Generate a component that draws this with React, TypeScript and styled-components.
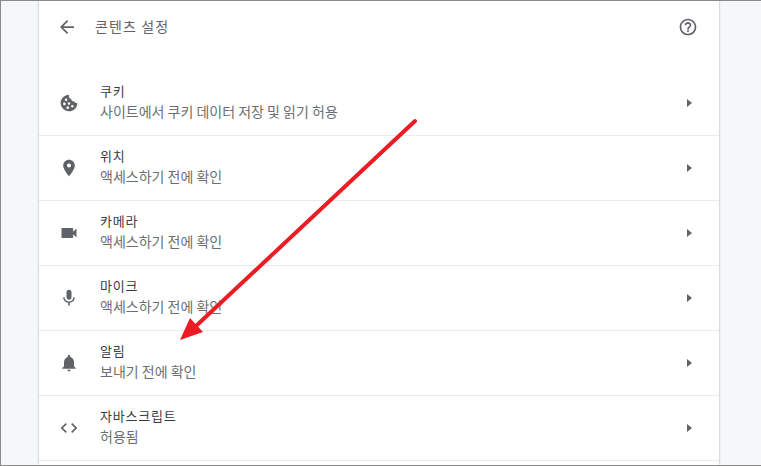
import { FC, ReactNode } from "react";
import styled, { createGlobalStyle } from "styled-components";

const GlobalStyle = createGlobalStyle`
  html, body {
    margin: 0;
    padding: 0;
    background: #f6f7f9;
  }
`;

const Frame = styled.div`
  position: relative;
  box-sizing: border-box;
  width: 761px;
  height: 466px;
  overflow: hidden;
  display: flex;
  justify-content: flex-start;
  padding-left: 38px;
  border: 1px solid #8a8a8a;
  border-right: none;
  background: #f6f7f9;
  font-family: "Noto Sans CJK KR", "Noto Sans", sans-serif;
`;

const Card = styled.main`
  width: 680px;
  height: 100%;
  background: #fff;
  box-shadow: 0 0 2px rgba(60, 64, 67, 0.45);
`;

const Header = styled.header`
  display: flex;
  align-items: center;
  height: 52px;
  padding: 0 21px 0 21px;
`;

const Title = styled.h1`
  flex: 1;
  margin: 0 0 3px 21px;
  font-size: 14px;
  font-weight: 400;
  letter-spacing: 1.1px;
  color: #5f6368;
`;

const Spacer = styled.div`
  height: 18px;
`;

const List = styled.ul`
  margin: 0;
  padding: 0;
  list-style: none;
`;

const Row = styled.li`
  box-sizing: border-box;
  display: flex;
  align-items: center;
  height: 65px;
  padding: 0 26px 0 20px;
  border-bottom: 1px solid #ebebeb;
`;

const IconSlot = styled.div`
  display: flex;
  justify-content: center;
  align-items: center;
  width: 20px;
  height: 20px;
  color: #5f6368;
`;

const TextBlock = styled.div`
  flex: 1;
  margin: 0 0 4px 21px;
  display: flex;
  flex-direction: column;
  gap: 2px;
`;

const RowTitle = styled.span`
  font-size: 13px;
  line-height: 18px;
  letter-spacing: 0.8px;
  color: #3a3c40;
`;

const RowSub = styled.span`
  font-size: 14px;
  line-height: 18px;
  color: #6b6f74;
`;

const Chevron = styled.span`
  width: 0;
  height: 0;
  margin-right: 1px;
  border-top: 4px solid transparent;
  border-bottom: 4px solid transparent;
  border-left: 5px solid #5f6368;
`;

const ArrowOverlay = styled.svg`
  position: absolute;
  left: -1px;
  top: -1px;
  pointer-events: none;
`;

const BackIcon = () => (
  <svg width="14" height="14" viewBox="0 0 16 16" fill="#5f6368">
    <path d="M16 7H3.8l5.6-5.6L8 0 0 8l8 8 1.4-1.4L3.8 9H16z" />
  </svg>
);

const HelpIcon = () => (
  <svg width="20" height="20" viewBox="0 0 24 24" fill="#5f6368">
    <path d="M11 18h2v-2h-2v2zm1-16C6.48 2 2 6.48 2 12s4.48 10 10 10 10-4.48 10-10S17.52 2 12 2zm0 18c-4.41 0-8-3.59-8-8s3.59-8 8-8 8 3.59 8 8-3.59 8-8 8zm0-14c-2.21 0-4 1.79-4 4h2c0-1.1.9-2 2-2s2 .9 2 2c0 2-3 1.75-3 5h2c0-2.25 3-2.5 3-5 0-2.21-1.79-4-4-4z" />
  </svg>
);

const CookieIcon = () => (
  <svg width="20" height="20" viewBox="0 0 24 24" fill="currentColor">
    <path fillRule="evenodd" d="M12 2.2c-5.5 0-10 4.4-10 9.9s4.5 9.9 10 9.9 10-4.5 10-10c-1.6.3-3-.3-3.5-1.9-1.9.5-3.8-.9-3.9-2.9C12.5 7.2 11.4 4.5 12 2.2zM8.5 6.5a1.6 1.6 0 1 1 0 3.2 1.6 1.6 0 0 1 0-3.2zM6.5 11.5a1.6 1.6 0 1 1 0 3.2 1.6 1.6 0 0 1 0-3.2zM12 11a1.5 1.5 0 1 1 0 3 1.5 1.5 0 0 1 0-3zM10.5 16a1.6 1.6 0 1 1 0 3.2 1.6 1.6 0 0 1 0-3.2zM16 14.5a1.5 1.5 0 1 1 0 3 1.5 1.5 0 0 1 0-3z" />
  </svg>
);

const PinIcon = () => (
  <svg width="20" height="20" viewBox="0 0 24 24" fill="currentColor">
    <path d="M12 2C8.13 2 5 5.13 5 9c0 5.25 7 13 7 13s7-7.75 7-13c0-3.87-3.13-7-7-7zm0 9.5a2.5 2.5 0 0 1 0-5 2.5 2.5 0 0 1 0 5z" />
  </svg>
);

const CameraIcon = () => (
  <svg width="20" height="20" viewBox="0 0 24 24" fill="currentColor">
    <path d="M17 10.5V7c0-.55-.45-1-1-1H4c-.55 0-1 .45-1 1v10c0 .55.45 1 1 1h12c.55 0 1-.45 1-1v-3.5l4 4v-11l-4 4z" />
  </svg>
);

const MicIcon = () => (
  <svg width="20" height="20" viewBox="0 0 24 24" fill="currentColor">
    <path d="M12 14c1.66 0 3-1.34 3-3V5c0-1.66-1.34-3-3-3S9 3.34 9 5v6c0 1.66 1.34 3 3 3zm5.3-3c0 3-2.54 5.1-5.3 5.1S6.7 14 6.7 11H5c0 3.41 2.72 6.23 6 6.72V21h2v-3.28c3.28-.48 6-3.3 6-6.72h-1.7z" />
  </svg>
);

const BellIcon = () => (
  <svg width="20" height="20" viewBox="0 0 24 24" fill="currentColor">
    <path d="M12 22c1.1 0 2-.9 2-2h-4c0 1.1.9 2 2 2zm6-6v-5c0-3.07-1.63-5.64-4.5-6.32V4c0-.83-.67-1.5-1.5-1.5s-1.5.67-1.5 1.5v.68C7.64 5.36 6 7.92 6 11v5l-2 2v1h16v-1l-2-2z" />
  </svg>
);

const CodeIcon = () => (
  <svg width="20" height="20" viewBox="0 0 24 24" fill="currentColor">
    <path d="M9.4 16.6 4.8 12l4.6-4.6L8 6l-6 6 6 6 1.4-1.4zm5.2 0 4.6-4.6-4.6-4.6L16 6l6 6-6 6-1.4-1.4z" />
  </svg>
);

interface ISetting {
  title: string;
  sub: string;
  icon: ReactNode;
}

const settings: ISetting[] = [
  { title: "쿠키", sub: "사이트에서 쿠키 데이터 저장 및 읽기 허용", icon: <CookieIcon /> },
  { title: "위치", sub: "액세스하기 전에 확인", icon: <PinIcon /> },
  { title: "카메라", sub: "액세스하기 전에 확인", icon: <CameraIcon /> },
  { title: "마이크", sub: "액세스하기 전에 확인", icon: <MicIcon /> },
  { title: "알림", sub: "보내기 전에 확인", icon: <BellIcon /> },
  { title: "자바스크립트", sub: "허용됨", icon: <CodeIcon /> },
];

const SettingRow: FC<{ setting: ISetting }> = ({ setting }) => (
  <Row>
    <IconSlot>{setting.icon}</IconSlot>
    <TextBlock>
      <RowTitle>{setting.title}</RowTitle>
      <RowSub>{setting.sub}</RowSub>
    </TextBlock>
    <Chevron />
  </Row>
);

const App: FC = () => (
  <Frame>
    <GlobalStyle />
    <Card>
      <Header>
        <BackIcon />
        <Title>콘텐츠 설정</Title>
        <HelpIcon />
      </Header>
      <Spacer />
      <List>
        {settings.map((setting) => (
          <SettingRow key={setting.title} setting={setting} />
        ))}
      </List>
    </Card>
    <ArrowOverlay width="761" height="466" viewBox="0 0 761 466">
      <path d="M415 121 L196 326" stroke="#ed1c24" strokeWidth="4" strokeLinecap="round" fill="none" />
      <path d="M180 340 L190 318 L203 332 Z" fill="#ed1c24" />
    </ArrowOverlay>
  </Frame>
);

export default App;
